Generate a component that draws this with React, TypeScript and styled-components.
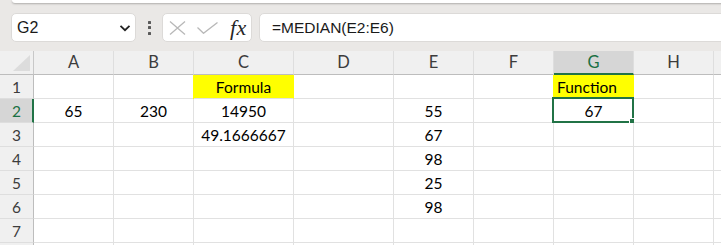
import React from "react";
import styled, { createGlobalStyle, css } from "styled-components";

const GlobalStyle = createGlobalStyle`
  html, body { margin: 0; padding: 0; background: #ffffff; }
  body { font-family: "Lato", "Liberation Sans", sans-serif; }
  * { box-sizing: border-box; }
`;

const AppFrame = styled.div`
  width: 721px;
  height: 245px;
  overflow: hidden;
  background: #ffffff;
  display: flex;
  flex-direction: column;
`;

const TopArea = styled.div`
  background: #eae8e6;
  display: flex;
  flex-direction: column;
  padding-bottom: 9px;
`;

const RibbonEdge = styled.div`
  height: 3px;
  margin-left: 12px;
  margin-right: -12px;
  background: #ffffff;
  border-bottom-left-radius: 6px;
  box-shadow: 0 1px 2px rgba(0, 0, 0, 0.25);
`;

const FormulaRow = styled.div`
  display: flex;
  align-items: stretch;
  height: 29px;
  margin-top: 10px;
  padding-left: 11px;
  margin-right: -20px;
`;

const NameBox = styled.div`
  width: 125px;
  background: #ffffff;
  border: 1px solid #dcdad8;
  border-radius: 5px;
  display: flex;
  align-items: center;
  justify-content: space-between;
  padding: 0 4px 0 5px;
  font-family: "Liberation Sans", sans-serif;
  font-size: 16px;
  color: #1a1a1a;
`;

const Dots = styled.div`
  width: 26px;
  display: flex;
  flex-direction: column;
  align-items: center;
  justify-content: center;
  gap: 2.5px;
  padding-left: 1px;
`;

const Dot = styled.span`
  width: 3px;
  height: 3px;
  background: #5a5a5a;
  border-radius: 0.5px;
`;

const FxBox = styled.div`
  width: 90px;
  background: #ffffff;
  border: 1px solid #dcdad8;
  border-radius: 5px;
  display: flex;
  align-items: center;
  padding-left: 6px;
  gap: 11px;
`;

const FxText = styled.span`
  font-family: "Liberation Serif", "DejaVu Serif", serif;
  font-style: italic;
  font-size: 22px;
  color: #262626;
  margin-left: 1px;
  letter-spacing: 0.5px;
  line-height: 1;
`;

const FormulaInput = styled.div`
  flex: 1;
  margin-left: 7px;
  background: #ffffff;
  border: 1px solid #dcdad8;
  border-radius: 5px;
  display: flex;
  align-items: center;
  padding-left: 12px;
  font-family: "Liberation Sans", sans-serif;
  font-size: 15.5px;
  color: #1a1a1a;
`;

const SheetGrid = styled.div`
  display: grid;
  grid-template-columns: 34px 80px 80px 100px 100px 80px 80px 80px 80px 80px;
  grid-auto-rows: 24px;
  width: 794px;
`;

const HeaderCellBase = css`
  background: #f0f0f0;
  font-size: 16.5px;
  color: #3c3c3c;
  text-align: center;
  line-height: 21px;
  padding-top: 1px;
`;

const Corner = styled.div`
  ${HeaderCellBase};
  border-right: 1px solid #c8c8c8;
  border-bottom: 1px solid #bdbdbd;
  position: relative;
`;

const CornerTriangle = styled.div`
  position: absolute;
  right: 3px;
  bottom: 3px;
  width: 0;
  height: 0;
  border-left: 17px solid transparent;
  border-bottom: 16px solid #dcdcdc;
`;

const ColHeader = styled.div<{ $active?: boolean }>`
  ${HeaderCellBase};
  border-right: 1px solid #dedede;
  border-bottom: 1px solid #bdbdbd;
  ${(p) =>
    p.$active &&
    css`
      background: #d6d6d6;
      color: #1a7043;
      border-bottom: 2px solid #217346;
      line-height: 20px;
    `}
`;

const RowHeader = styled.div<{ $active?: boolean }>`
  ${HeaderCellBase};
  font-size: 15.5px;
  padding-top: 2px;
  border-right: 1px solid #bdbdbd;
  border-bottom: 1px solid #dedede;
  ${(p) =>
    p.$active &&
    css`
      background: #d6d6d6;
      color: #1a7043;
      border-right: 2px solid #217346;
      padding-left: 1px;
    `}
`;

const Cell = styled.div<{ $fill?: string; $align?: "left" | "center" }>`
  position: relative;
  border-right: 1px solid #e1e1e1;
  border-bottom: 1px solid #e1e1e1;
  background: #ffffff;
  font-size: 15.5px;
  color: #000000;
  line-height: 21px;
  padding-top: 2px;
  white-space: nowrap;
  text-align: ${(p) => (p.$align === "left" ? "left" : "center")};
  padding-left: ${(p) => (p.$align === "left" ? "3px" : "0")};
  ${(p) =>
    p.$fill &&
    css`
      background: ${p.$fill};
      border-right-color: ${p.$fill};
      box-shadow: -1px 0 0 ${p.$fill};
    `}
`;

const Selection = styled.div`
  position: absolute;
  top: -2px;
  left: -2px;
  right: -1px;
  bottom: -1px;
  border: 2px solid #217346;
  pointer-events: none;
`;

const FillHandle = styled.div`
  position: absolute;
  right: -3px;
  bottom: -3px;
  width: 6px;
  height: 6px;
  background: #217346;
  border-left: 1px solid #ffffff;
  border-top: 1px solid #ffffff;
`;

type CellData = { v?: string; fill?: string; align?: "left" | "center"; selected?: boolean };

// Column I and row 8 lie just past the window's edge: drawn, but without labels.
const columns = ["A", "B", "C", "D", "E", "F", "G", "H", "I"];
const visibleLabel = (c: string) => (c === "I" ? "" : c);

const rows: Record<number, Record<string, CellData>> = {
  1: { C: { v: "Formula", fill: "#ffff00" }, G: { v: "Function", fill: "#ffff00", align: "left" } },
  2: { A: { v: "65" }, B: { v: "230" }, C: { v: "14950" }, E: { v: "55" }, G: { v: "67", selected: true } },
  3: { C: { v: "49.1666667" }, E: { v: "67" } },
  4: { E: { v: "98" } },
  5: { E: { v: "25" } },
  6: { E: { v: "98" } },
  7: {},
  8: {},
};

const CancelIcon = () => (
  <svg width="17" height="14" viewBox="0 0 17 14" fill="none">
    <path d="M1 0.5 L16 13.5 M16 0.5 L1 13.5" stroke="#b8b8b8" strokeWidth="1.3" />
  </svg>
);

const EnterIcon = () => (
  <svg width="21" height="12" viewBox="0 0 21 12" fill="none">
    <path d="M0.5 5.5 L6.5 11.3 L20.5 0.5" stroke="#b8b8b8" strokeWidth="1.3" />
  </svg>
);

const Chevron = () => (
  <svg width="12" height="8" viewBox="0 0 12 8" fill="none">
    <path d="M1.5 1.8 L6 6.2 L10.5 1.8" stroke="#222" strokeWidth="1.8" />
  </svg>
);

export default function App() {
  return (
    <AppFrame>
      <GlobalStyle />
      <TopArea>
        <RibbonEdge />
        <FormulaRow>
          <NameBox>
            <span>G2</span>
            <Chevron />
          </NameBox>
          <Dots>
            <Dot />
            <Dot />
            <Dot />
          </Dots>
          <FxBox>
            <CancelIcon />
            <EnterIcon />
            <FxText>fx</FxText>
          </FxBox>
          <FormulaInput>=MEDIAN(E2:E6)</FormulaInput>
        </FormulaRow>
      </TopArea>
      <SheetGrid>
        <Corner>
          <CornerTriangle />
        </Corner>
        {columns.map((c) => (
          <ColHeader key={c} $active={c === "G"}>
            {visibleLabel(c)}
          </ColHeader>
        ))}
        {Object.keys(rows).map((rk) => {
          const r = Number(rk);
          return (
            <React.Fragment key={r}>
              <RowHeader $active={r === 2}>{r < 8 ? r : ""}</RowHeader>
              {columns.map((c) => {
                const d = rows[r][c] || {};
                return (
                  <Cell key={c} $fill={d.fill} $align={d.align}>
                    {d.v}
                    {d.selected && (
                      <Selection>
                        <FillHandle />
                      </Selection>
                    )}
                  </Cell>
                );
              })}
            </React.Fragment>
          );
        })}
      </SheetGrid>
    </AppFrame>
  );
}
